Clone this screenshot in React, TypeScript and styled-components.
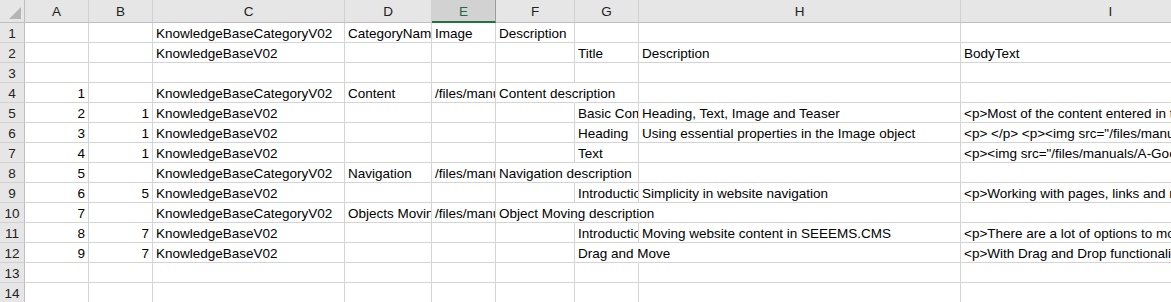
import React from 'react';
import styled, { createGlobalStyle } from 'styled-components';

const GlobalStyle = createGlobalStyle`
  html, body {
    margin: 0;
    padding: 0;
    background: #ffffff;
    overflow: hidden;
  }
`;

const COLS = [25, 64, 64, 192, 87, 64, 79, 64, 322, 300];
const LETTERS = ['A', 'B', 'C', 'D', 'E', 'F', 'G', 'H', 'I'];
const SELECTED = 'E';

const Sheet = styled.div`
  display: grid;
  grid-template-columns: ${COLS.map((c) => `${c}px`).join(' ')};
  grid-template-rows: 23px;
  grid-auto-rows: 20px;
  font-family: 'Liberation Sans', Arial, sans-serif;
  font-size: 13.5px;
  color: #000000;
  width: max-content;
`;

const Corner = styled.div`
  position: relative;
  background: #e6e6e6;
  border-right: 1px solid #bfbfbf;
  border-bottom: 1px solid #bfbfbf;
  box-sizing: border-box;

  &::after {
    content: '';
    position: absolute;
    right: 3px;
    bottom: 3px;
    width: 0;
    height: 0;
    border-style: solid;
    border-width: 0 0 12px 12px;
    border-color: transparent transparent #b5b5b5 transparent;
  }
`;

const ColHeader = styled.div<{ $selected?: boolean }>`
  display: flex;
  align-items: center;
  justify-content: center;
  box-sizing: border-box;
  background: ${(p) => (p.$selected ? '#d2d2d2' : '#e6e6e6')};
  color: ${(p) => (p.$selected ? '#1e6b41' : '#222222')};
  border-right: 1px solid ${(p) => (p.$selected ? '#9c9c9c' : '#d0d0d0')};
  border-bottom: ${(p) => (p.$selected ? '2px solid #217346' : '1px solid #bfbfbf')};
  padding-top: 1px;
`;

const RowHeader = styled.div`
  display: flex;
  align-items: center;
  justify-content: center;
  box-sizing: border-box;
  background: #e6e6e6;
  color: #222222;
  border-right: 1px solid #bfbfbf;
  border-bottom: 1px solid #d0d0d0;
  padding-top: 2px;
`;

// $spill: the cell's text runs on over the empty cell(s) to its right, as Excel does
const Cell = styled.div<{ $num?: boolean; $spill?: boolean }>`
  box-sizing: border-box;
  border-right: 1px solid ${(p) => (p.$spill ? 'transparent' : '#d4d4d4')};
  border-bottom: 1px solid #d4d4d4;
  overflow: ${(p) => (p.$spill ? 'visible' : 'hidden')};
  white-space: nowrap;
  line-height: 19px;
  padding: 1px ${(p) => (p.$num ? '3px' : '0')} 0 3px;
  text-align: ${(p) => (p.$num ? 'right' : 'left')};
`;

type Row = Record<string, string | number>;

const rows: Row[] = [
  { C: 'KnowledgeBaseCategoryV02', D: 'CategoryName', E: 'Image', F: 'Description' },
  { C: 'KnowledgeBaseV02', G: 'Title', H: 'Description', I: 'BodyText' },
  {},
  { A: 1, C: 'KnowledgeBaseCategoryV02', D: 'Content', E: '/files/manuals/content.png', F: 'Content description' },
  { A: 2, B: 1, C: 'KnowledgeBaseV02', G: 'Basic Components', H: 'Heading, Text, Image and Teaser', I: '<p>Most of the content entered in the website' },
  { A: 3, B: 1, C: 'KnowledgeBaseV02', G: 'Heading', H: 'Using essential properties in the Image object', I: '<p> </p> <p><img src="/files/manuals/heading.png"' },
  { A: 4, B: 1, C: 'KnowledgeBaseV02', G: 'Text', I: '<p><img src="/files/manuals/A-Good-Text.png"' },
  { A: 5, C: 'KnowledgeBaseCategoryV02', D: 'Navigation', E: '/files/manuals/navigation.png', F: 'Navigation description' },
  { A: 6, B: 5, C: 'KnowledgeBaseV02', G: 'Introduction', H: 'Simplicity in website navigation', I: '<p>Working with pages, links and menus' },
  { A: 7, C: 'KnowledgeBaseCategoryV02', D: 'Objects Moving', E: '/files/manuals/moving.png', F: 'Object Moving description' },
  { A: 8, B: 7, C: 'KnowledgeBaseV02', G: 'Introduction', H: 'Moving website content in SEEEMS.CMS', I: '<p>There are a lot of options to move objects' },
  { A: 9, B: 7, C: 'KnowledgeBaseV02', G: 'Drag and Move', I: '<p>With Drag and Drop functionality you can' },
  {},
  {},
];

const spill = new Set(['4F', '8F', '10F', '10G', '12G']);

const App: React.FC = () => {
  return (
    <>
      <GlobalStyle />
      <Sheet>
        <Corner />
        {LETTERS.map((l) => (
          <ColHeader key={l} $selected={l === SELECTED}>
            {l}
          </ColHeader>
        ))}
        {rows.map((row, index) => {
          const n = index + 1;
          return (
            <React.Fragment key={n}>
              <RowHeader>{n}</RowHeader>
              {LETTERS.map((col) => {
                const value = row[col];
                return (
                  <Cell key={col} $num={typeof value === 'number'} $spill={spill.has(`${n}${col}`)}>
                    {value ?? ''}
                  </Cell>
                );
              })}
            </React.Fragment>
          );
        })}
      </Sheet>
    </>
  );
};

export default App;
